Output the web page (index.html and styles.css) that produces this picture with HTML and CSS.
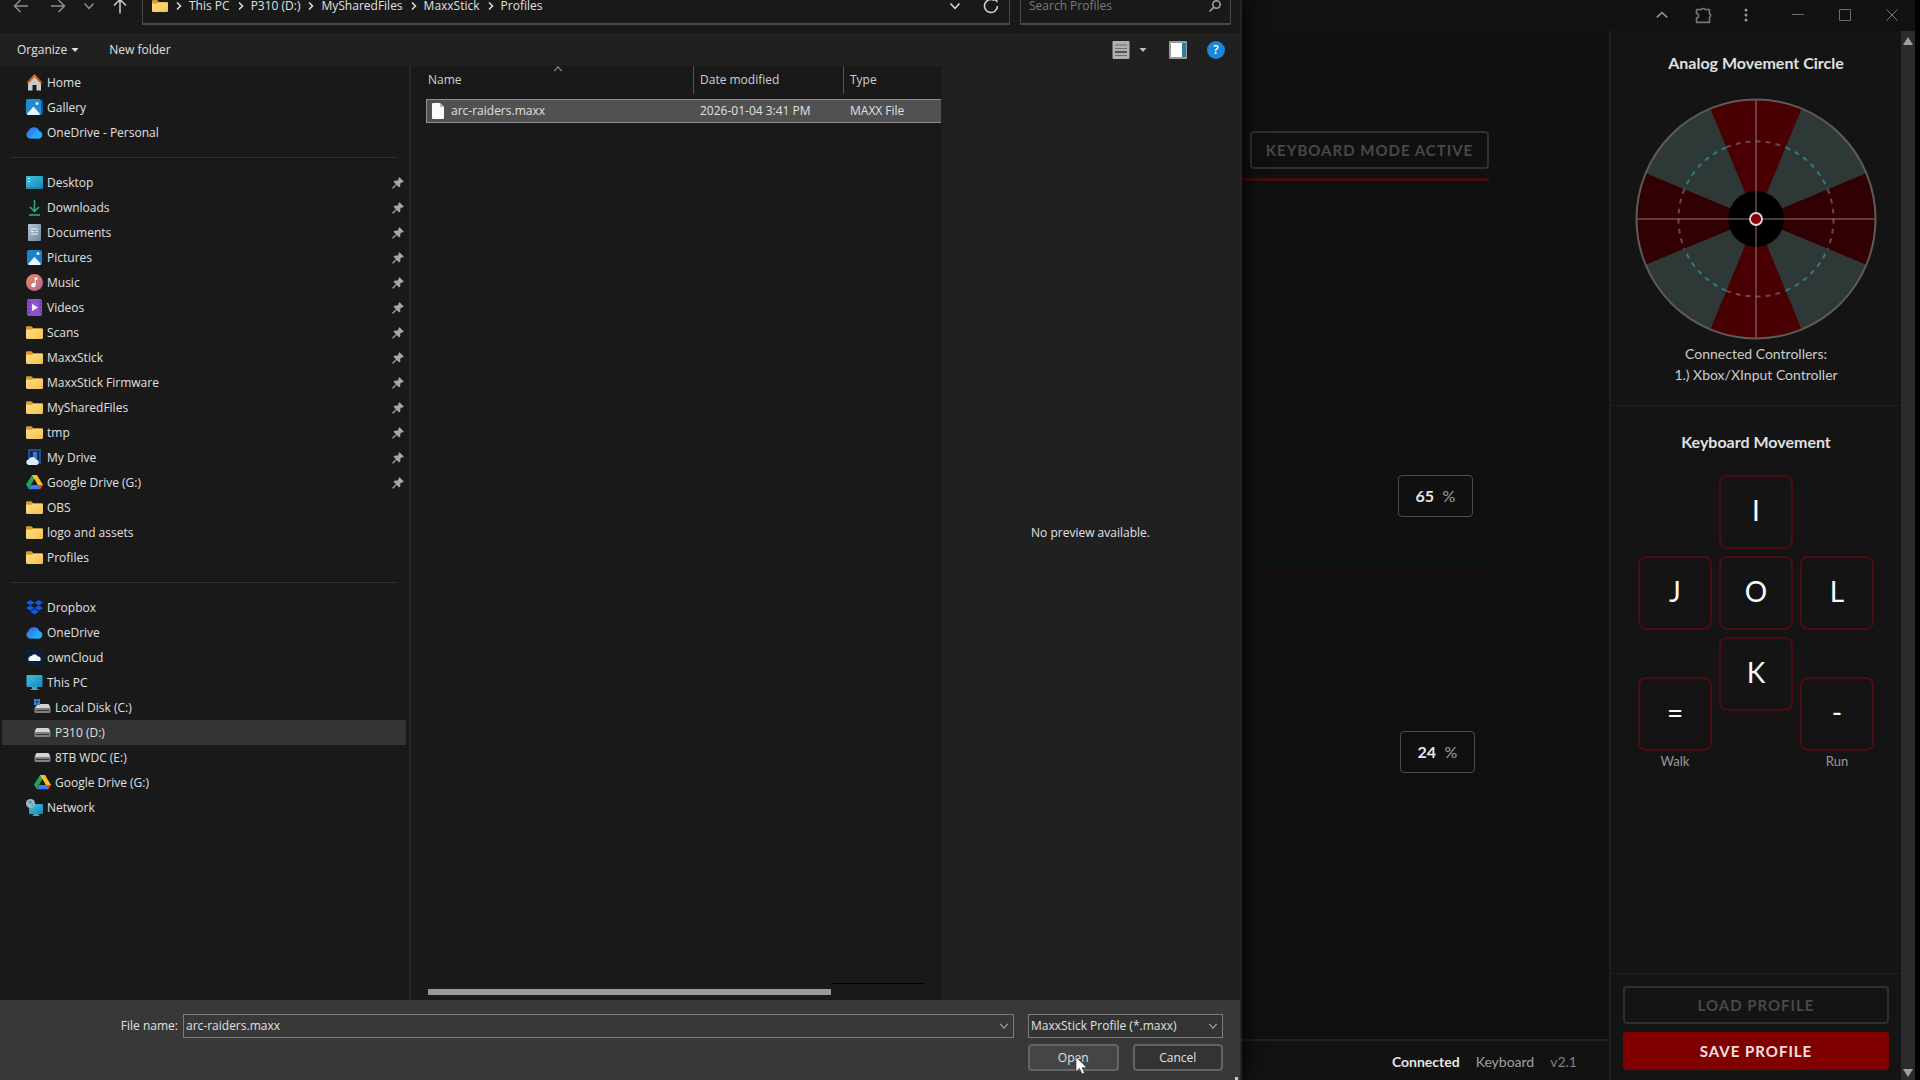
FILE: index.html
```html
<!DOCTYPE html>
<html lang="en">
<head>
<meta charset="utf-8">
<title>MaxxStick - Open profile</title>
<link rel="stylesheet" href="styles.css">
</head>
<body>
<svg class="sprite" aria-hidden="true">
  <defs>
    <linearGradient id="g-folder" x1="0" y1="0" x2="1" y2="1"><stop offset="0" stop-color="#ffe08a"/><stop offset="1" stop-color="#f2c14e"/></linearGradient>
    <linearGradient id="g-cloud" x1="0" y1="0" x2="1" y2="1"><stop offset="0" stop-color="#2a6fe0"/><stop offset=".5" stop-color="#2f8cf5"/><stop offset="1" stop-color="#18b8f5"/></linearGradient>
    <linearGradient id="g-screen" x1="0" y1="0" x2="1" y2="1"><stop offset="0" stop-color="#3fc3d8"/><stop offset="1" stop-color="#1687b8"/></linearGradient>
    <linearGradient id="g-music" x1="0" y1="0" x2="1" y2="1"><stop offset="0" stop-color="#f0845c"/><stop offset="1" stop-color="#b0679c"/></linearGradient>
    <linearGradient id="g-roof" x1="0" y1="0" x2="0" y2="1"><stop offset="0" stop-color="#e8732a"/><stop offset="1" stop-color="#a3552a"/></linearGradient>
    <linearGradient id="g-doc" x1="0" y1="0" x2="1" y2="1"><stop offset="0" stop-color="#b5c6d6"/><stop offset="1" stop-color="#71859b"/></linearGradient>
    <symbol id="folder" viewBox="0 0 16 16"><path d="M0 3q0-1 1-1h4l2 2h8q1 0 1 1v3H0z" fill="#d99b2b"/><path d="M0 5.500h5.500L7 4.500h8q1 0 1 1V13q0 1-1 1H1q-1 0-1-1z" fill="url(#g-folder)"/></symbol>
    <symbol id="home" viewBox="0 0 17 17"><path d="M2 8l6.500-6 6.500 6v8.500h-4.500V11h-4v5.500H2z" fill="#c9c9c9"/><path d="M0.500 8.500L8.500 0l8 8.500-1.500 1.200-6.500-6.400L2 9.700z" fill="url(#g-roof)"/></symbol>
    <symbol id="gallery" viewBox="0 0 17 17"><rect x="3" y="1" width="14" height="15" rx="2" fill="#135a94"/><rect width="15" height="16" rx="2" fill="#218bd0"/><path d="M1 15l6.500-7.500L14 15q-.5 1-1.500 1h-10Q1.500 16 1 15z" fill="#e9f6ff"/><circle cx="11" cy="4.500" r="1.500" fill="#dff2ff"/></symbol>
    <symbol id="pictures" viewBox="0 0 17 17"><rect x="1" y="1" width="15" height="15" rx="2" fill="#1c82cc"/><path d="M2 15l6.500-7L15 15q-.5 1-1.500 1h-10Q2.500 16 2 15z" fill="#eef8ff"/><circle cx="12" cy="4.500" r="1.500" fill="#dff2ff"/></symbol>
    <symbol id="onedrive" viewBox="0 0 17 17"><path d="M4 14.500A4 4 0 0 1 2.500 7 5.800 5.800 0 0 1 13.400 7.200 3.800 3.800 0 0 1 13.500 14.500z" fill="url(#g-cloud)"/><path d="M4 14.500L11 6.300q1.200.2 2.400.9a3.800 3.800 0 0 1 .1 7.300z" fill="#23b1fa" opacity=".6"/></symbol>
    <symbol id="desktop" viewBox="0 0 17 17"><rect y="2" width="17" height="13" rx="1" fill="url(#g-screen)"/><path d="M2 4.500h2M2 7.500h2" stroke="#c6f4fa" stroke-width="1.200"/><path d="M1 14h15" stroke="#1a7098"/></symbol>
    <symbol id="download" viewBox="0 0 17 17"><path d="M8.500 1v11M4 8l4.500 4.500L13 8M3 16h11" fill="none" stroke="#2fae88" stroke-width="1.500"/></symbol>
    <symbol id="document" viewBox="0 0 17 17"><rect x="2" width="13" height="17" rx="1" fill="url(#g-doc)"/><path d="M5 5h7M5 7.500h3M9.500 7.500H12M5 10h7" stroke="#eef4fa" stroke-width="1.200"/></symbol>
    <symbol id="music" viewBox="0 0 17 17"><circle cx="8.500" cy="8.500" r="8.500" fill="url(#g-music)"/><path d="M8.700 3.500h2.800v2.200H9.700V11a2.200 2.200 0 1 1-1-1.800z" fill="#fff"/></symbol>
    <symbol id="video" viewBox="0 0 17 17"><rect x="1" width="15" height="17" rx="2" fill="#8d53cf"/><path d="M2.800 2v14M14.200 2v14" stroke="#57309a" stroke-width="1.300" stroke-dasharray="2 1.500"/><path d="M6 4.700l6 3.800-6 3.800z" fill="#f3eaff"/></symbol>
    <symbol id="mydrive" viewBox="0 0 17 17"><rect x="2" y="0" width="13" height="15" fill="#1c4f98"/><rect x="4" y="2" width="9" height="10" fill="#0f2c5c"/><path d="M7 3h4v7H7z" fill="#4a78b4"/><path d="M2.500 16A2.800 2.800 0 0 1 2.600 10.500a4 4 0 0 1 7.400-.2A3 3 0 0 1 11 16z" fill="#dcebfa"/></symbol>
    <symbol id="gdrive" viewBox="0 0 17 17"><path d="M6 1h5L5.300 10.700 2.700 15 0 10.500z" fill="#20a35c"/><path d="M6 1h5l6 10h-5.500z" fill="#fbbc28"/><path d="M12 11h5l-2.700 4.300-3.300-2.800z" fill="#e5432f"/><path d="M5.300 11H12l2.300 4.300H2.700z" fill="#3b7ded"/><path d="M8.500 5.200L5.300 10.800h6.400z" fill="#191919"/></symbol>
    <symbol id="dropbox" viewBox="0 0 17 17"><path d="M4.300 1l4.200 2.700-4.200 2.700L0 3.700zM12.700 1L17 3.700l-4.300 2.700-4.200-2.700zM4.300 6.400l4.200 2.700-4.200 2.700L0 9.100zM12.700 6.400L17 9.100l-4.300 2.700-4.200-2.700zM4.300 12.700l4.200-2.700 4.200 2.700-4.200 2.800z" fill="#1257e8"/></symbol>
    <symbol id="owncloud" viewBox="0 0 17 17"><rect width="17" height="17" fill="#0b1f3d"/><path d="M3.500 12A2.300 2.300 0 0 1 3.500 8a2.800 2.800 0 0 1 2.500-1.300 3.300 3.300 0 0 1 5.800.9 2.600 2.600 0 0 1 2.200 4.400z" fill="#f4f7fb"/></symbol>
    <symbol id="pc" viewBox="0 0 17 17"><rect x="0.500" y="1" width="16" height="12" rx="1" fill="url(#g-screen)"/><path d="M6 13h5v2h1.500v1h-8v-1H6z" fill="#5e9fb5"/></symbol>
    <symbol id="disk" viewBox="0 0 17 17"><path d="M3 4h11q1 0 1.500 1.500L16.500 9H.500l1-3.500Q2 4 3 4z" fill="#d3d3d3"/><rect x="0.500" y="8" width="16" height="5" rx="1" fill="#7c8280"/><path d="M2 10.500h13" stroke="#343836"/></symbol>
    <symbol id="windisk" viewBox="0 0 17 17"><path d="M5 5h9q1 0 1.500 1.500l1 3.500H.500l1.500-3z" fill="#d3d3d3"/><rect x="0.500" y="9" width="16" height="5" rx="1" fill="#7c8280"/><path d="M2 11.500h13" stroke="#343836"/><path d="M0 0h2.700v2.700H0zM3.300 0H6v2.700H3.300zM0 3.300h2.700V6H0zM3.300 3.300H6V6H3.300z" fill="#2d8fe6"/></symbol>
    <symbol id="network" viewBox="0 0 17 17"><rect x="3" y="5" width="14" height="10" rx="1" fill="url(#g-screen)"/><path d="M7.500 15h5v1.200h1V17h-7v-.8h1z" fill="#5e9fb5"/><circle cx="4.500" cy="4.500" r="4.500" fill="#9bb9c9"/><path d="M2 2.500l3-1 1 2-2 1.500zM5.500 5l2 .5-1.500 2z" fill="#4e9f9c"/></symbol>
    <symbol id="pin" viewBox="0 0 12 12"><path d="M7.500.500l4 4-1 .8-.8-.2-1.800 1.800.2 2.300-1 1-2.500-2.500L1.200 11.400l-.7-.3.200-.7L4.200 7.200 1.800 4.800l1-1 2.300.3 1.800-1.900-.2-.8z" fill="#a3a8ac" stroke="#a3a8ac" stroke-width=".5"/></symbol>
    <symbol id="chev-d" viewBox="0 0 12 12"><path d="M1.500 3.500L6 8.500l4.500-5" fill="none" stroke="currentColor" stroke-width="1.500"/></symbol>
    <symbol id="chev-r" viewBox="0 0 8 12"><path d="M2 2.500L5.500 6 2 9.500" fill="none" stroke="currentColor" stroke-width="1.500"/></symbol>
    <symbol id="chev-u" viewBox="0 0 12 12"><path d="M1.500 8.500L6 3.500l4.500 5" fill="none" stroke="currentColor" stroke-width="1.500"/></symbol>
    <symbol id="tri-d" viewBox="0 0 8 8"><path d="M.500 2h7L4 6z" fill="currentColor"/></symbol>
  </defs>
</svg>

<div class="screen">
  <section class="dialog" role="dialog" aria-label="Open">
    <header class="navbar">
      <div class="history">
        <button class="icon-btn" aria-label="Back"><svg width="16" height="16" viewBox="0 0 16 16"><path d="M15 8H1.500M7.500 2l-6 6 6 6" fill="none" stroke="#8f8f8f" stroke-width="1.500"/></svg></button>
        <button class="icon-btn forward" aria-label="Forward"><svg width="16" height="16" viewBox="0 0 16 16"><path d="M1 8h13.500M8.500 2l6 6-6 6" fill="none" stroke="#8f8f8f" stroke-width="1.500"/></svg></button>
        <button class="icon-btn recent" aria-label="Recent locations"><svg width="12" height="12"><use href="#chev-d"/></svg></button>
        <button class="icon-btn up" aria-label="Up"><svg width="16" height="16" viewBox="0 0 16 16"><path d="M8 15.500V1.500M2 7.500l6-6 6 6" fill="none" stroke="#d0d0d0" stroke-width="1.500"/></svg></button>
      </div>
      <div class="address">
        <svg width="16" height="16"><use href="#folder"/></svg>
        <svg class="crumb-sep" width="8" height="12"><use href="#chev-r"/></svg><a href="#pc">This PC</a>
        <svg class="crumb-sep" width="8" height="12"><use href="#chev-r"/></svg><a href="#d">P310 (D:)</a>
        <svg class="crumb-sep" width="8" height="12"><use href="#chev-r"/></svg><a href="#shared">MySharedFiles</a>
        <svg class="crumb-sep" width="8" height="12"><use href="#chev-r"/></svg><a href="#maxx">MaxxStick</a>
        <svg class="crumb-sep" width="8" height="12"><use href="#chev-r"/></svg><a href="#profiles">Profiles</a>
        <button class="icon-btn previous" aria-label="Previous locations"><svg width="12" height="12"><use href="#chev-d"/></svg></button>
        <button class="icon-btn refresh" aria-label="Refresh"><svg width="16" height="16" viewBox="0 0 16 16"><path d="M11.500 2.500A6.500 6.500 0 1 0 14.500 8" fill="none" stroke="#d0d0d0" stroke-width="1.600"/><path d="M10 .500h4.500V5z" fill="#d0d0d0"/></svg></button>
      </div>
      <div class="search">
        <input type="text" placeholder="Search Profiles" aria-label="Search Profiles">
        <svg width="14" height="14" viewBox="0 0 14 14"><circle cx="8.500" cy="5.500" r="3.700" fill="none" stroke="#a8a8a8" stroke-width="1.500"/><path d="M5.800 8.200L1.500 12.500" stroke="#a8a8a8" stroke-width="1.500"/></svg>
      </div>
    </header>

    <div class="toolbar">
      <button class="tool">Organize <svg width="8" height="8"><use href="#tri-d"/></svg></button>
      <button class="tool">New folder</button>
      <div class="view-tools">
        <button class="icon-btn view" aria-label="Change view"><svg width="18" height="18" viewBox="0 0 18 18"><rect x="0.500" width="17" height="18" rx="1" fill="#b0b0b0"/><path d="M3 4h12M3 7.500h12M3 14.500h12" stroke="#6d6d6d"/><path d="M3 11h12" stroke="#333" stroke-width="1.500"/></svg></button>
        <button class="icon-btn more" aria-label="More views"><svg width="8" height="8"><use href="#tri-d"/></svg></button>
        <button class="icon-btn pane" aria-label="Preview pane"><svg width="18" height="18" viewBox="0 0 18 18"><rect width="18" height="18" rx="1" fill="#9b9b9b"/><rect x="2" y="2" width="11" height="14" fill="#fff"/><rect x="13" y="2" width="4" height="14" fill="#2d7fa8"/></svg></button>
        <button class="help" aria-label="Help">?</button>
      </div>
    </div>

    <div class="browser">
      <nav class="places" aria-label="Folders">
        <a href="#"><svg><use href="#home"/></svg>Home</a>
        <a href="#"><svg><use href="#gallery"/></svg>Gallery</a>
        <a href="#"><svg><use href="#onedrive"/></svg>OneDrive - Personal</a>
        <hr>
        <a href="#"><svg><use href="#desktop"/></svg>Desktop<svg class="pin"><use href="#pin"/></svg></a>
        <a href="#"><svg><use href="#download"/></svg>Downloads<svg class="pin"><use href="#pin"/></svg></a>
        <a href="#"><svg><use href="#document"/></svg>Documents<svg class="pin"><use href="#pin"/></svg></a>
        <a href="#"><svg><use href="#pictures"/></svg>Pictures<svg class="pin"><use href="#pin"/></svg></a>
        <a href="#"><svg><use href="#music"/></svg>Music<svg class="pin"><use href="#pin"/></svg></a>
        <a href="#"><svg><use href="#video"/></svg>Videos<svg class="pin"><use href="#pin"/></svg></a>
        <a href="#"><svg><use href="#folder"/></svg>Scans<svg class="pin"><use href="#pin"/></svg></a>
        <a href="#"><svg><use href="#folder"/></svg>MaxxStick<svg class="pin"><use href="#pin"/></svg></a>
        <a href="#"><svg><use href="#folder"/></svg>MaxxStick Firmware<svg class="pin"><use href="#pin"/></svg></a>
        <a href="#"><svg><use href="#folder"/></svg>MySharedFiles<svg class="pin"><use href="#pin"/></svg></a>
        <a href="#"><svg><use href="#folder"/></svg>tmp<svg class="pin"><use href="#pin"/></svg></a>
        <a href="#"><svg><use href="#mydrive"/></svg>My Drive<svg class="pin"><use href="#pin"/></svg></a>
        <a href="#"><svg><use href="#gdrive"/></svg>Google Drive (G:)<svg class="pin"><use href="#pin"/></svg></a>
        <a href="#"><svg><use href="#folder"/></svg>OBS</a>
        <a href="#"><svg><use href="#folder"/></svg>logo and assets</a>
        <a href="#"><svg><use href="#folder"/></svg>Profiles</a>
        <hr>
        <a href="#"><svg><use href="#dropbox"/></svg>Dropbox</a>
        <a href="#"><svg><use href="#onedrive"/></svg>OneDrive</a>
        <a href="#"><svg><use href="#owncloud"/></svg>ownCloud</a>
        <a href="#"><svg><use href="#pc"/></svg>This PC</a>
        <a href="#" class="child"><svg><use href="#windisk"/></svg>Local Disk (C:)</a>
        <a href="#" class="child selected" aria-current="true"><svg><use href="#disk"/></svg>P310 (D:)</a>
        <a href="#" class="child"><svg><use href="#disk"/></svg>8TB WDC (E:)</a>
        <a href="#" class="child"><svg><use href="#gdrive"/></svg>Google Drive (G:)</a>
        <a href="#"><svg><use href="#network"/></svg>Network</a>
      </nav>

      <div class="listing">
        <table class="files">
          <colgroup><col class="c-name"><col class="c-date"><col class="c-type"></colgroup>
          <thead>
            <tr>
              <th aria-sort="ascending"><div class="head">Name<svg class="sort" width="10" height="10"><use href="#chev-u"/></svg></div></th>
              <th><div class="head">Date modified</div></th>
              <th><div class="head">Type</div></th>
            </tr>
          </thead>
          <tbody>
            <tr>
              <td><div class="file"><svg width="12" height="16" viewBox="0 0 12 16"><path d="M1 0h7l4 4v11q0 1-1 1H1q-1 0-1-1V1q0-1 1-1z" fill="#fafafa"/><path d="M8 0l4 4H8z" fill="#b5b5b5"/></svg>arc-raiders.maxx</div></td>
              <td>2026-01-04 3:41 PM</td>
              <td>MAXX File</td>
            </tr>
          </tbody>
        </table>
        <div class="hscroll"><span class="thumb"></span><span class="rest"></span></div>
      </div>

      <aside class="preview">No preview available.</aside>
    </div>

    <footer class="dialog-foot">
      <label class="name-label" for="fname">File name:</label>
      <div class="combo name-combo">
        <input id="fname" type="text" value="arc-raiders.maxx">
        <svg width="10" height="10"><use href="#chev-d"/></svg>
      </div>
      <div class="combo type-combo">
        <select aria-label="File type"><option>MaxxStick Profile (*.maxx)</option></select>
        <svg width="10" height="10"><use href="#chev-d"/></svg>
      </div>
      <div class="actions">
        <button class="btn open">Open<svg class="cursor" width="14" height="18" viewBox="0 0 14 18"><path d="M1 0v14.500l3.500-3 2.500 5.500 2.500-1-2.300-5.200H12z" fill="#fff" stroke="#222" stroke-width=".6"/></svg></button>
        <button class="btn">Cancel</button>
      </div>
      <span class="grip"></span>
    </footer>
  </section>

  <section class="app" aria-label="MaxxStick">
    <header class="titlebar">
      <button class="icon-btn" aria-label="Collapse"><svg width="14" height="14" viewBox="0 0 12 12"><path d="M1.500 8L6 4l4.500 4" fill="none" stroke="#8c8c8c" stroke-width="1.500"/></svg></button>
      <button class="icon-btn" aria-label="Extensions"><svg width="18" height="18" viewBox="0 0 18 18"><path d="M1.500 3.500h4.800a2.200 2.200 0 0 1 3.600 0h4.600v4.300a2 2 0 0 1 0 3.600v5h-13v-4.600a2.100 2.100 0 0 0 0-4.200z" fill="none" stroke="#777" stroke-width="1.600" stroke-linejoin="round"/></svg></button>
      <button class="icon-btn menu" aria-label="Menu"><svg width="14" height="14" viewBox="0 0 14 14"><g fill="#999"><circle cx="7" cy="2" r="1.500"/><circle cx="7" cy="7" r="1.500"/><circle cx="7" cy="12" r="1.500"/></g></svg></button>
      <button class="icon-btn wide" aria-label="Minimize"><svg width="12" height="12"><path d="M0 5.500h12" stroke="#6c6c6c"/></svg></button>
      <button class="icon-btn wide" aria-label="Maximize"><svg width="12" height="12"><path d="M.500.500h11v11h-11z" fill="none" stroke="#6c6c6c"/></svg></button>
      <button class="icon-btn wide" aria-label="Close"><svg width="12" height="12"><path d="M.500.500l11 11M11.500.500l-11 11" stroke="#7a7a7a"/></svg></button>
    </header>
    <div class="app-body">
      <div class="content">
        <main class="panel">
          <div class="mode"><button class="btn-outline mode-btn" disabled>KEYBOARD MODE ACTIVE</button></div>
          <div class="setting first">
            <span class="track"></span>
            <label class="percent"><input type="text" value="65" aria-label="Walk percentage">%</label>
          </div>
          <div class="rule"></div>
          <div class="setting second">
            <span class="track"></span>
            <label class="percent"><input type="text" value="24" aria-label="Deadzone percentage">%</label>
          </div>
        </main>
        <footer class="status"><span class="on">Connected</span><span>Keyboard</span><span class="ver">v2.1</span></footer>
      </div>

      <aside class="side">
        <section class="analog">
          <h2>Analog Movement Circle</h2>
          <svg class="dial" width="242" height="242" viewBox="-121 -121 242 242">
            <circle r="120" fill="#2e3837"/>
            <path d="M0 0L-45.900-110.900A120 120 0 0 1 45.900-110.900zM0 0L-45.900 110.900A120 120 0 0 0 45.900 110.900z" fill="#490002"/>
            <path d="M0 0L-110.900-45.900A120 120 0 0 0-110.900 45.900zM0 0L110.900-45.900A120 120 0 0 1 110.900 45.900z" fill="#300002"/>
            <g fill="none" stroke="#327a77" stroke-width="2" stroke-dasharray="5 5">
              <path d="M29.700-71.600A77.500 77.500 0 0 1 71.600-29.700"/><path d="M29.700 71.600A77.500 77.500 0 0 0 71.600 29.700"/>
              <path d="M-29.700-71.600A77.500 77.500 0 0 0-71.600-29.700"/><path d="M-29.700 71.600A77.500 77.500 0 0 1-71.600 29.700"/>
            </g>
            <g fill="none" stroke="#714548" stroke-width="2" stroke-dasharray="5 5">
              <path d="M-29.700-71.600A77.500 77.500 0 0 1 29.700-71.600"/><path d="M-29.700 71.600A77.500 77.500 0 0 0 29.700 71.600"/>
              <path d="M-71.600-29.700A77.500 77.500 0 0 0-71.600 29.700"/><path d="M71.600-29.700A77.500 77.500 0 0 1 71.600 29.700"/>
            </g>
            <circle r="28" fill="#000"/>
            <path d="M-120 0H120M0-120V120" stroke="#a08484" stroke-opacity=".6" stroke-width="1.500"/>
            <circle r="119.500" fill="none" stroke="#5f5959" stroke-width="2"/>
            <circle r="6" fill="#840006" stroke="#e6d4d4" stroke-width="1.800"/>
          </svg>
          <p>Connected Controllers:</p>
          <p>1.) Xbox/XInput Controller</p>
        </section>
        <section class="keys">
          <h2>Keyboard Movement</h2>
          <div class="pad">
            <div class="col outer"><button class="key">J</button><div class="key-wrap"><button class="key" id="walk">=</button><label for="walk">Walk</label></div></div>
            <div class="col"><button class="key">I</button><button class="key">O</button><button class="key">K</button></div>
            <div class="col outer"><button class="key">L</button><div class="key-wrap"><button class="key" id="run">-</button><label for="run">Run</label></div></div>
          </div>
        </section>
        <div class="profile">
          <button class="btn-outline" disabled>LOAD PROFILE</button>
          <button class="btn-save">SAVE PROFILE</button>
        </div>
      </aside>
      <div class="vscroll">
        <svg width="10" height="8" viewBox="0 0 10 8"><path d="M5 0l5 8H0z" fill="#a0a0a0"/></svg>
        <svg width="10" height="8" viewBox="0 0 10 8"><path d="M5 8L0 0h10z" fill="#a0a0a0"/></svg>
      </div>
    </div>
  </section>
</div>
</body>
</html>
```
FILE: styles.css
```css
* { box-sizing: border-box; }

body {
  margin: 0;
  background: #101010;
  color: #e0e0e0;
  font: 12px/16px "Open Sans", "Noto Sans", sans-serif;
  overflow: hidden;
}

button, input, select { font: inherit; color: inherit; margin: 0; }
button { padding: 0; border: 0; background: none; }
a { color: inherit; text-decoration: none; }
svg { display: block; flex: none; }
input, select { min-width: 0; border: 0; background: none; outline: 0; }

.sprite { position: absolute; width: 0; height: 0; }
.screen { display: flex; min-height: 100vh; }
.icon-btn { display: flex; align-items: center; justify-content: center; }

/* File dialog */
.dialog {
  display: flex;
  flex-direction: column;
  flex: 1 1 1242px;
  min-width: 0;
  background: #191919;
  border-right: 2px solid #242424;
  box-shadow: 0 0 20px #000;
  z-index: 1;
}

.navbar {
  display: flex;
  align-items: center;
  height: 51px;
  margin-top: -18px;
  padding: 5px 9px 8px 0;
}

.history { display: flex; align-items: center; width: 142px; padding-left: 13px; color: #8f8f8f; }
.history .icon-btn { width: 16px; margin-right: 21px; }
.history .forward, .history .recent { margin-right: 15px; }
.history .up { margin-right: 0; }

.address {
  display: flex;
  align-items: center;
  flex: 1;
  height: 38px;
  padding: 0 10px 0 9px;
  border: 1px solid #484848;
  border-bottom-width: 2px;
}
.crumb-sep { margin: 0 6px 0 7px; }
.address .previous { margin-left: auto; width: 16px; }
.address .refresh { width: 16px; margin-left: 20px; }

.search {
  display: flex;
  align-items: center;
  width: 211px;
  height: 38px;
  margin-left: 10px;
  padding: 0 8px;
  border: 1px solid #484848;
  border-bottom-width: 2px;
}
.search input { flex: 1; padding: 0; }
.search input::placeholder { color: #7c7c7c; opacity: 1; }

.toolbar {
  display: flex;
  align-items: center;
  height: 33px;
  padding: 0 15px 0 17px;
  gap: 30px;
  background: #202020;
}
.tool { display: flex; align-items: center; gap: 4px; }
.view-tools { display: flex; align-items: center; margin-left: auto; color: #c0c0c0; }
.view-tools .more { margin-left: 9px; }
.view-tools .pane { margin-left: 22px; }
.help {
  width: 18px;
  height: 18px;
  margin-left: 20px;
  border-radius: 50%;
  background: #1c86d8;
  color: #fff;
  font-weight: 600;
}

.browser { display: flex; flex: 1; }

.places {
  width: 411px;
  padding: 4px 3px 0 2px;
  border-right: 2px solid #262626;
}
.places a {
  display: flex;
  align-items: center;
  height: 25px;
  padding: 0 0 0 24px;
}
.places a svg { width: 17px; height: 17px; margin-right: 4px; }
.places a .pin { width: 12px; height: 12px; margin: 0 2px 0 auto; }
.places .child { padding-left: 32px; }
.places .selected { background: #333; }
.places hr { height: 1px; margin: 12px 8px; border: 0; background: #303030; }

.listing { display: flex; flex-direction: column; flex: 1; padding-left: 15px; }
.files { width: 100%; table-layout: fixed; border-collapse: separate; border-spacing: 0; }
.c-name { width: 267px; }
.c-date { width: 150px; }
.files th { padding: 0 0 5px; font-weight: 400; text-align: left; color: #d0d0d0; }
.head { position: relative; height: 28px; padding: 6px; border-left: 1px solid #555; }
th:first-child .head { padding-left: 2px; border-left: 0; }
.sort { position: absolute; top: -2px; left: 127px; color: #8a8a8a; }
.files td { height: 24px; padding: 0 7px; background: #515151; border: solid #8f8f8f; border-width: 1px 0; }
.files td:first-child { padding-left: 5px; border-left-width: 1px; }
.file { display: flex; align-items: center; gap: 7px; }

.hscroll { display: flex; margin: auto 0 5px 2px; padding-right: 17px; }
.hscroll .thumb { flex: 403; height: 6px; background: #999; }
.hscroll .rest { flex: 93; height: 1px; background: #000; margin-top: -6px; }

.preview {
  display: flex;
  align-items: center;
  justify-content: center;
  width: 299px;
  background: #202020;
}

.dialog-foot {
  position: relative;
  display: grid;
  grid-template-columns: 178px 1fr 195px;
  column-gap: 5px;
  row-gap: 6px;
  align-content: start;
  height: 80px;
  padding: 14px 17px 0 0;
  background: #383838;
}
.name-label { text-align: right; line-height: 24px; }
.combo { display: flex; align-items: center; height: 24px; padding: 0 4px 0 2px; border: 1px solid #7c7c7c; color: #a0a0a0; }
.combo input, .combo select { flex: 1; padding: 0; color: #e0e0e0; appearance: none; }
.name-combo { margin-right: 9px; }
.type-combo { background: #333; }
.actions { grid-column: 3; display: flex; gap: 14px; }
.btn { flex: 1; height: 27px; border: 2px solid #646464; border-radius: 4px; background: #333; }
.open { position: relative; background: #454545; }
.cursor { position: absolute; left: 45px; top: 11px; }
.grip { position: absolute; right: 2px; bottom: 0; width: 3px; height: 3px; background: #ccc; }

/* Main application */
.app {
  display: flex;
  flex-direction: column;
  flex: 1 1 678px;
  min-width: 0;
  border-right: 5px solid #000;
  font: 14px/20px Lato, "Open Sans", sans-serif;
}

.titlebar {
  display: flex;
  justify-content: flex-end;
  height: 31px;
  background: #111;
}
.titlebar .icon-btn { width: 42px; height: 29px; }
.titlebar .menu { margin-right: 7px; }
.titlebar .wide { width: 47px; }

.app-body { display: flex; flex: 1; }
.content { display: flex; flex-direction: column; flex: 1; }
.panel { flex: 1; }

.mode { display: flex; justify-content: flex-end; margin: 100px 120px 0 0; padding-bottom: 9px; border-bottom: 3px solid #420c11; }

.btn-outline, .btn-save { height: 38px; border-radius: 4px; font-size: 15px; font-weight: 700; letter-spacing: 1px; }
.btn-outline { border: 2px solid #303030; color: #484848; }
.btn-save { background: #800000; color: #f0e0e0; }
.mode-btn { width: 239px; }

.setting { display: flex; align-items: center; gap: 15px; }
.first { margin: 294px 136px 0 0; }
.second { margin: 155px 134px 0 0; }
.track { flex: 1; height: 2px; background: #151515; }
.percent {
  display: flex;
  align-items: center;
  justify-content: center;
  gap: 9px;
  width: 75px;
  height: 42px;
  border: 1px solid #4c4c4c;
  border-radius: 4px;
  color: #a0a0a0;
  font-size: 16px;
}
.percent input { width: 18px; padding: 0; color: #e6e6e6; font-weight: 700; }
.rule { height: 3px; margin: 56px 120px 0 8px; background: #1d0c0f; }

.status {
  display: flex;
  align-items: center;
  justify-content: flex-end;
  gap: 16px;
  height: 41px;
  padding: 2px 32px 0 0;
  border-top: 2px solid #222;
  color: #a0a0a0;
  background: #121212;
}
.status .on { color: #e6e6e6; font-weight: 700; }
.status .ver { color: #808080; }

.side { display: flex; flex-direction: column; width: 292px; background: #141414; border-left: 2px solid #202020; }
.side h2 { margin: 0; font-size: 16px; line-height: 20px; font-weight: 700; text-align: center; }
.side p { margin: 0; line-height: 21px; text-align: center; color: #ccc; }
.analog { padding: 22px 0 20px; border-bottom: 1px solid #202020; }
.dial { margin: 25px auto 3px; }
.keys { padding: 26px 0 0; }

.pad { display: flex; justify-content: center; gap: 7px; margin-top: 23px; }
.col { display: flex; flex-direction: column; gap: 7px; width: 74px; }
.outer { gap: 47px; padding-top: 81px; }
.key { height: 74px; border: 2px solid #4a0d11; border-radius: 8px; color: #fafafa; font-size: 28px; line-height: 32px; padding-bottom: 4px; }
.key-wrap { display: flex; flex-direction: column; text-align: center; font-size: 13px; line-height: 20px; color: #999; }

.profile { display: flex; flex-direction: column; gap: 8px; margin-top: auto; padding: 12px 12px 10px; border-top: 1px solid #202020; }

.vscroll { display: flex; flex-direction: column; align-items: center; justify-content: space-between; width: 14px; padding: 6px 0 3px; background: #2b2b2b; }
```
